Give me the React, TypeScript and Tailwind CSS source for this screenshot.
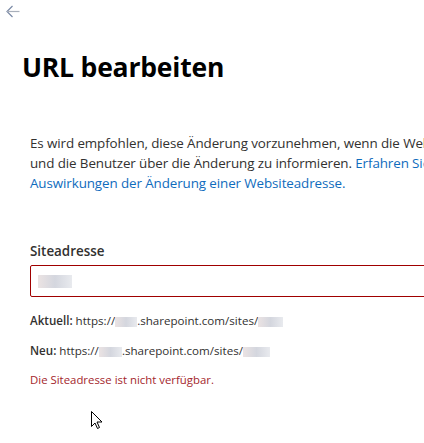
import React from 'react';

function Blur({ w, className = '' }: { w: number; className?: string }) {
  return (
    <span
      className={`inline-block h-[10px] align-middle bg-gradient-to-r from-[#e6dcdc] via-[#c9ccd6] to-[#e3e5ea] opacity-80 ${className}`}
      style={{ width: w }}
    />
  );
}

export default function App() {
  return (
    <div className="relative w-[424px] h-[443px] overflow-hidden bg-white text-[#323130] font-['Open_Sans','Noto_Sans',sans-serif]">
      <div className="h-[22px] pl-[6px] pt-[5px]">
        <svg width="14" height="13" viewBox="0 0 14 13" fill="none">
          <path d="M6.5 1 L1 6.5 L6.5 12" stroke="#7a8aa6" strokeWidth="1.2" />
          <path d="M1 6.5 H13.5" stroke="#a9b0bb" strokeWidth="1.2" />
        </svg>
      </div>

      <h1 className="ml-[22px] mt-[27px] text-[26.5px] leading-[36px] font-bold text-black tracking-[-0.2px]">
        URL bearbeiten
      </h1>

      <div className="w-[700px] pl-[30px]">
        <p className="mt-[48px] text-[13.4px] leading-[20px] whitespace-nowrap tracking-[-0.1px]">
          Es wird empfohlen, diese Änderung vorzunehmen, wenn die Websiteaktivität gering ist,
          <br />
          und die Benutzer über die Änderung zu informieren.{' '}
          <span className="text-[#0f6cbd]">Erfahren Sie mehr über die</span>
          <br />
          <span className="text-[#0f6cbd]">Auswirkungen der Änderung einer Websiteadresse.</span>
        </p>

        <div className="mt-[48px] text-[13.4px] leading-[20px] font-semibold">Siteadresse</div>
        <div className="mt-[4px] h-[32px] w-[600px] rounded-[2px] border border-[#a00000] flex items-center pl-[7px]">
          <Blur w={34} className="h-[13px]" />
        </div>

        <div className="mt-[16px] text-[11.6px] leading-[16px] whitespace-nowrap">
          <span className="font-semibold">Aktuell:</span> https://<Blur w={22} />.sharepoint.com/sites/<Blur w={25} />
        </div>
        <div className="mt-[14px] text-[11.6px] leading-[16px] whitespace-nowrap">
          <span className="font-semibold">Neu:</span> https://<Blur w={23} />.sharepoint.com/sites/<Blur w={27} />
        </div>
        <div className="mt-[13px] text-[11.4px] leading-[16px] text-[#a4262c]">
          Die Siteadresse ist nicht verfügbar.
        </div>
      </div>

      <svg className="absolute left-[91px] top-[411px]" width="12" height="19" viewBox="0 0 12 19">
        <path d="M0.5 0.5 L0.5 15.5 L4 12 L6.5 17.5 L8.5 16.5 L6 11 L11 11 Z" fill="white" stroke="black" strokeWidth="1" strokeLinejoin="miter" />
      </svg>
    </div>
  );
}
